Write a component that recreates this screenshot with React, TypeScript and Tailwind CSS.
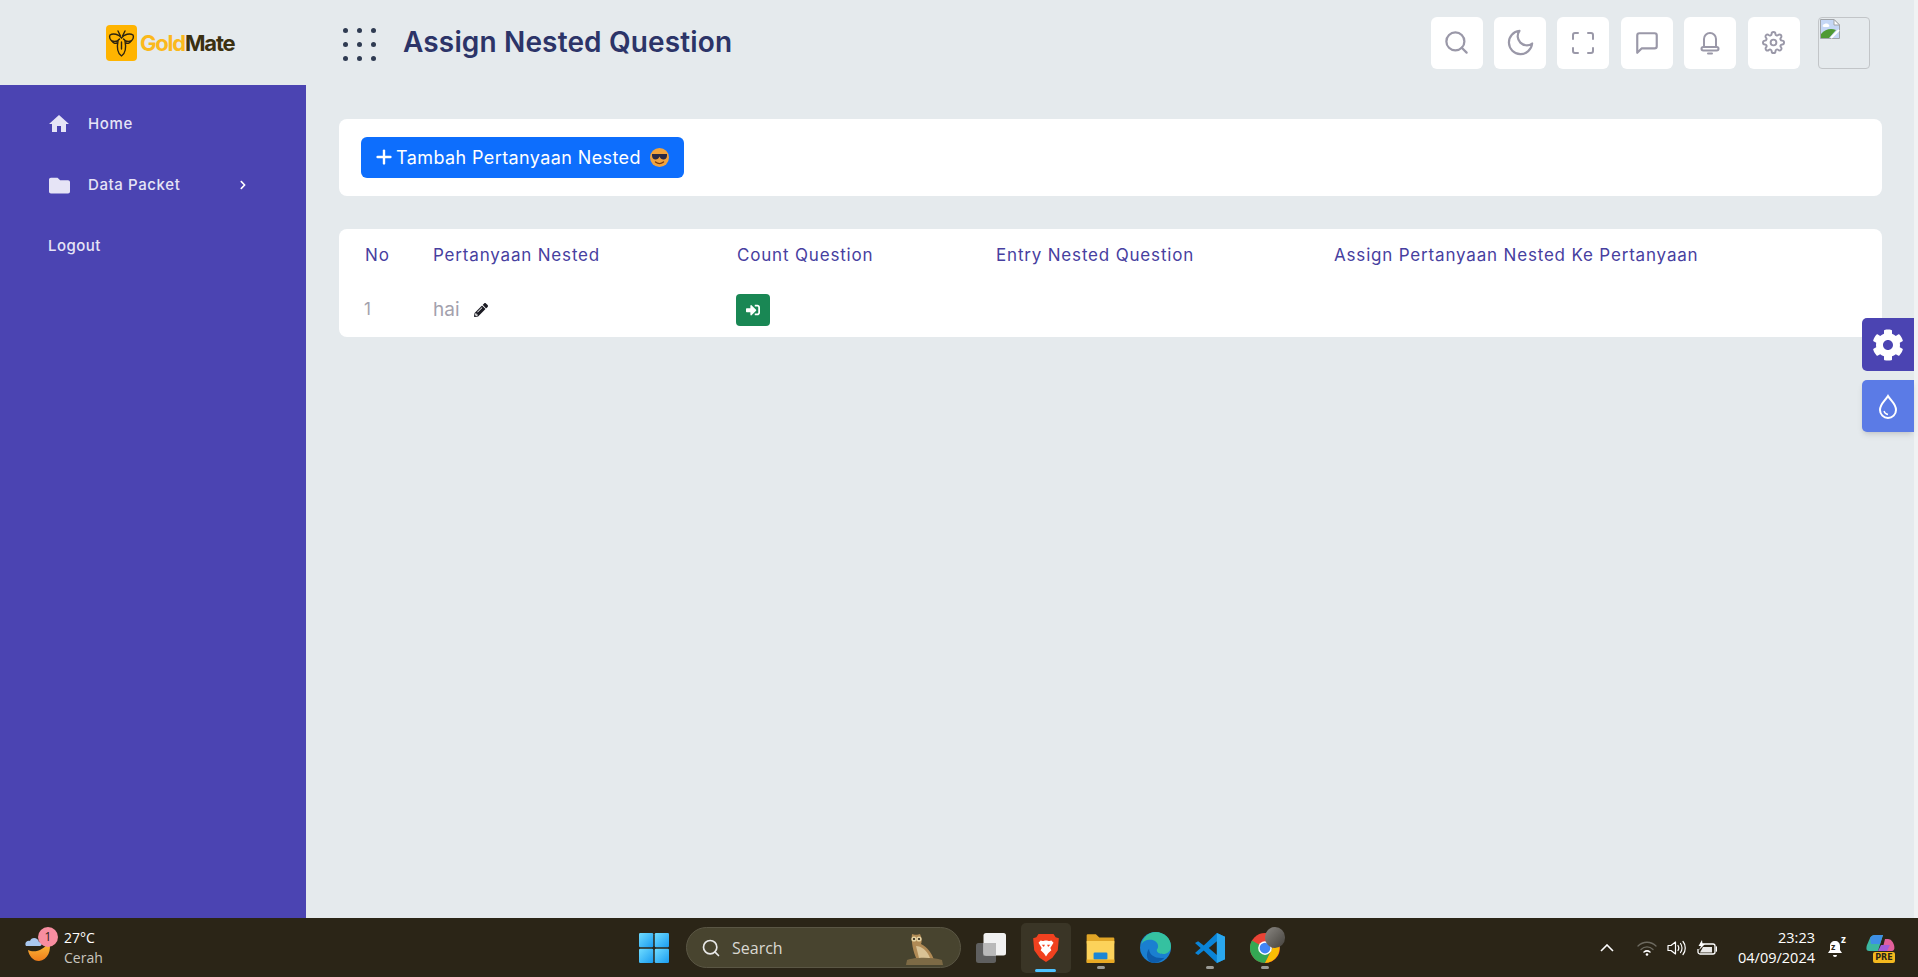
import { useState } from "react";
import { FaFolder, FaChevronRight, FaPencilAlt, FaSignInAlt, FaCog } from "react-icons/fa";
import { FiSearch, FiMoon, FiMessageSquare, FiSettings, FiPlus } from "react-icons/fi";
import { MdHome } from "react-icons/md";

const font = "font-['Inter','Open_Sans',sans-serif]";

function Logo() {
  return (
    <div className="flex items-center gap-[3px]">
      <div className="w-[31px] h-[36px] rounded-[4px] bg-[#ffb400] flex items-center justify-center">
        <svg width="27" height="29" viewBox="0 0 27 29" fill="none" stroke="#2d2410" strokeWidth="1.400" strokeLinecap="round">
          <path d="M13.500 9C11 5 5 4 2 6c-1 2 0 5 2 6 3 1 6 0 7.500-2" />
          <path d="M13.500 9C16 5 22 4 25 6c1 2 0 5-2 6-3 1-6 0-7.500-2" />
          <path d="M4 12c1 2 3 3 5 2" />
          <path d="M23 12c-1 2-3 3-5 2" />
          <path d="M10 12c-1 5-1 12 3.500 15 4.500-3 4.500-10 3.500-15" />
          <path d="M13.500 13v7" />
          <path d="M10 2l2.500 5M17 2l-2.500 5" />
        </svg>
      </div>
      <div className="text-[22px] font-bold tracking-[-1.200px]">
        <span className="text-[#fbb91c]">Gold</span>
        <span className="text-[#3b3011]">Mate</span>
      </div>
    </div>
  );
}

function MenuDots() {
  return (
    <div className="grid grid-cols-3 gap-[9px]">
      {[1, 2, 3, 4, 5, 6, 7, 8, 9].map((d) => (
        <span key={d} className="w-[5px] h-[5px] rounded-full bg-[#2f3b52]" />
      ))}
    </div>
  );
}

function FullscreenIcon() {
  return (
    <svg width="22" height="22" viewBox="0 0 22 22" fill="none" stroke="#9a98a8" strokeWidth="2" strokeLinecap="round">
      <path d="M1 7V3a2 2 0 0 1 2-2h3M16 1h3a2 2 0 0 1 2 2v4M21 16v3a2 2 0 0 1-2 2h-3M6 21H3a2 2 0 0 1-2-2v-3" />
    </svg>
  );
}

function BellIcon() {
  return (
    <svg width="20" height="24" viewBox="0 0 20 24" fill="none" stroke="#9a98a8" strokeWidth="2" strokeLinecap="round" strokeLinejoin="round">
      <path d="M4 16V8a6 6 0 0 1 12 0v8" />
      <rect x="1.500" y="16" width="17" height="3.500" rx="1.750" />
      <path d="M8 22.500h4" />
    </svg>
  );
}

function BrokenImage() {
  return (
    <div className="w-[52px] h-[52px] ml-[7px] rounded-[4px] border border-[#c2c5c8]">
      <svg width="20" height="20" viewBox="0 0 20 20" className="mt-[1px] ml-[1px]">
        <path d="M.5.500h13.500l5.500 5.500v13.500H.5z" fill="#c5d7f5" stroke="#a0a4a8" />
        <path d="M14 .5V6h5.500z" fill="#ffffff" stroke="#a0a4a8" />
        <path d="M1 19v-4c4-5 10-6 15-4l-7 8z" fill="#4f9a34" />
        <path d="M3 6c2-2 5-2 6 0 1 1 0 2-1 2H4C3 8 2 7 3 6z" fill="#ffffff" />
        <path d="M11 19l8-8" stroke="#ffffff" strokeWidth="2" />
      </svg>
    </div>
  );
}

function SunglassesEmoji() {
  return (
    <svg width="21" height="21" viewBox="0 0 21 21" className="ml-[8px]">
      <circle cx="10.500" cy="10.500" r="9.500" fill="#f2a33c" />
      <path d="M3 7h15v1.500c0 2.500-1.500 4-3.500 4-2 0-3.200-1.200-4-3-.8 1.800-2 3-4 3-2 0-3.500-1.500-3.500-4z" fill="#2b2a45" />
      <path d="M6.500 15c2.500 2 5.500 2 8 0" stroke="#7a3d12" strokeWidth="1.400" fill="none" strokeLinecap="round" />
    </svg>
  );
}

function WeatherIcon() {
  return (
    <div className="relative w-[30px] h-[30px]">
      <svg width="30" height="30" viewBox="0 0 30 30">
        <defs>
          <linearGradient id="moon" x1="0" y1="0" x2="0" y2="1">
            <stop offset="0" stopColor="#ffc640" />
            <stop offset="1" stopColor="#ef7d1a" />
          </linearGradient>
        </defs>
        <path d="M3 17c6 3 16 1 21-9 3 9-1 19-10 20-6 0-10-5-11-11z" fill="url(#moon)" />
        <path d="M1 13c-2-3 1-6 4-5 1-4 8-4 9 1 3 0 4 4 0 4z" fill="#a9c8f0" />
      </svg>
      <div className="absolute top-[-6px] left-[13px] w-[20px] h-[20px] rounded-full bg-[#f88ea0] text-[#2b2517] text-[12px] flex items-center justify-center">
        1
      </div>
    </div>
  );
}

function OwlIcon() {
  return (
    <svg width="37" height="33" viewBox="0 0 37 33">
      <path d="M6 2c2 1 6 1 8 0 2 4 2 8 1 10 6 3 11 9 13 16H11C7 20 5 9 6 2z" fill="#b08a55" />
      <circle cx="8" cy="7" r="2.600" fill="#e6d3a3" />
      <circle cx="13" cy="7" r="2.600" fill="#e6d3a3" />
      <circle cx="8" cy="7" r="1.100" fill="#2b2517" />
      <circle cx="13" cy="7" r="1.100" fill="#2b2517" />
      <path d="M10 14c5 0 11 4 14 12H13z" fill="#d9c294" />
      <path d="M1 28c7-3 26-3 35 0l1 5H0z" fill="#7d6a45" />
    </svg>
  );
}

function WindowsLogo() {
  return (
    <svg width="30" height="30" viewBox="0 0 24 24">
      <defs>
        <linearGradient id="win" x1="0" y1="0" x2="1" y2="1">
          <stop offset="0" stopColor="#6fdcff" />
          <stop offset="1" stopColor="#1a9cf0" />
        </linearGradient>
      </defs>
      <rect x="0" y="0" width="11.400" height="11.400" rx="1" fill="url(#win)" />
      <rect x="12.600" y="0" width="11.400" height="11.400" rx="1" fill="url(#win)" />
      <rect x="0" y="12.600" width="11.400" height="11.400" rx="1" fill="url(#win)" />
      <rect x="12.600" y="12.600" width="11.400" height="11.400" rx="1" fill="url(#win)" />
    </svg>
  );
}

function TaskView() {
  return (
    <svg width="30" height="30" viewBox="0 0 24 24">
      <rect x="0" y="8" width="16" height="16" rx="2" fill="#5f5f5f" />
      <rect x="6" y="0" width="18" height="18" rx="2" fill="#f1f1f1" />
      <rect x="6" y="8" width="10" height="10" fill="#b9b9b9" />
    </svg>
  );
}

function BraveLogo() {
  return (
    <svg width="26" height="30" viewBox="0 0 24 28">
      <path d="M5 1h14l2 3 3 1-1 11-5 7-6 4-6-4-5-7L0 5l3-1z" fill="#f1411f" />
      <path d="M7 7c2 1 3 0 5 0s3 1 5 0l2 2-3 5 1 2-3 3-2 3-2-3-3-3 1-2-3-5z" fill="#fff" />
      <path d="M8 11h3l-1 2zM16 11h-3l1 2z" fill="#f1411f" />
    </svg>
  );
}

function FolderIcon() {
  return (
    <svg width="31" height="30" viewBox="0 0 24 26">
      <path d="M0 2a1 1 0 0 1 1-1h7l3 3h12a1 1 0 0 1 1 1v4H0z" fill="#e0a526" />
      <path d="M0 7h24v18a1 1 0 0 1-1 1H1a1 1 0 0 1-1-1z" fill="#fcd25a" />
      <rect x="6" y="17" width="12" height="6" rx="1" fill="#1b86d6" />
      <rect x="0" y="23" width="24" height="3" fill="#e9a923" />
    </svg>
  );
}

function EdgeLogo() {
  return (
    <svg width="31" height="31" viewBox="0 0 24 24">
      <circle cx="12" cy="12" r="12" fill="#1a7fd0" />
      <path d="M1 10C2 4 7 0 12 0c7 0 12 5 12 11 0 4-3 6-6 6-3 0-5-1-5-3 0-1 1-1 1-3 0-3-3-5-6-5-3 0-6 1-7 4z" fill="#35c1a0" />
      <path d="M11 24C5 24 4 17 7 13c0 5 5 8 12 7-2 2-5 4-8 4z" fill="#0d5cab" />
    </svg>
  );
}

function VscodeLogo() {
  return (
    <svg width="30" height="30" viewBox="0 0 24 24">
      <path d="M17.500 0 24 3v18l-6.500 3L7 14l-4.500 3.500L0 16l4.500-4L0 8l2.500-1.500L7 10z" fill="#0a84d8" />
      <path d="M17.500 6.500 11 12l6.500 5.500z" fill="#2b2517" />
      <path d="M17.500 0 24 3v18l-6.500 3z" fill="#2aa7ee" />
    </svg>
  );
}

function ChromeLogo() {
  return (
    <div className="relative w-[30px] h-[30px]">
      <svg width="30" height="30" viewBox="0 0 24 24">
        <circle cx="12" cy="12" r="12" fill="#ea4335" />
        <path d="M12 24A12 12 0 0 1 1.600 6L12 12l6 0-6 12z" fill="#34a853" />
        <path d="M12 24l6-12-1-5h5.500A12 12 0 0 1 12 24z" fill="#fbbc04" />
        <circle cx="12" cy="12" r="5.500" fill="#fff" />
        <circle cx="12" cy="12" r="4.300" fill="#4285f4" />
      </svg>
      <div className="absolute top-[-6px] left-[15px] w-[20px] h-[21px] rounded-full bg-gradient-to-br from-[#8b8883] to-[#45423d]" />
    </div>
  );
}

function CopilotLogo() {
  return (
    <div className="relative w-[29px] h-[24px] -mt-[4px]">
      <svg width="29" height="22" viewBox="0 0 29 22">
        <path d="M9 1h8l-5 16H3C0 17 0 14 1 11l3-7c1-2 3-3 5-3z" fill="#3bb7a0" />
        <path d="M9 1h8l-3 9H5l-1-6c1-2 3-3 5-3z" fill="#3e8fe6" />
        <path d="M19 5h3c3 0 5 3 6 6 1 4 0 6-3 6h-9z" fill="#e2609c" />
        <path d="M12 17h9l3-6H15z" fill="#a25bd8" />
      </svg>
      <div className="absolute bottom-[-5px] right-0 w-[22px] text-center h-[11px] rounded-[2px] bg-[#f4b81e] text-[#2b2517] text-[8px] leading-[11px] font-bold font-['DejaVu_Sans',sans-serif]">
        PRE
      </div>
    </div>
  );
}

function WifiIcon() {
  return (
    <svg width="20" height="16" viewBox="0 0 20 16" fill="none" strokeLinecap="round">
      <path d="M1 6c5-5 13-5 18 0" stroke="#6d6a60" strokeWidth="1.300" />
      <path d="M4 9.500c3.500-3.500 8.500-3.500 12 0" stroke="#6d6a60" strokeWidth="1.300" />
      <path d="M7 12c2-1.500 4-1.500 6 0" stroke="#ffffff" strokeWidth="1.500" />
      <circle cx="10" cy="14.500" r="1.300" fill="#ffffff" />
    </svg>
  );
}

function SoundIcon() {
  return (
    <svg width="20" height="16" viewBox="0 0 20 16" fill="none" stroke="#ffffff" strokeWidth="1.200" strokeLinecap="round">
      <path d="M1 5.500h3L8.500 2v12L4 10.500H1z" strokeLinejoin="round" />
      <path d="M11 5.500c1 1.500 1 3.500 0 5M13.500 3.500c2 2.500 2 6.500 0 9M16 1.500c3 3.500 3 9.500 0 13" />
    </svg>
  );
}

function BatteryIcon() {
  return (
    <svg width="20" height="16" viewBox="0 0 20 16" fill="none" stroke="#ffffff" strokeWidth="1.300">
      <path d="M4 4h12a2 2 0 0 1 2 2v6a2 2 0 0 1-2 2H3a2 2 0 0 1-2-2V9" />
      <path d="M19.500 7v4" strokeLinecap="round" />
      <path d="M5 0 1.500 6H4l-2 4 6-6H5.500z" fill="#ffffff" stroke="none" />
      <path d="M3 12.500 6 7h9v5.500z" fill="#ffffff" stroke="none" opacity="0.9" />
    </svg>
  );
}

function SnoozeBell() {
  return (
    <div className="relative w-[16px] h-[20px]">
      <svg width="16" height="20" viewBox="0 0 16 20">
        <path d="M8 3c-3 0-5 2-5 5v4l-2 3h14l-2-3V8c0-3-2-5-5-5z" fill="#ffffff" />
        <path d="M6 17a2 2 0 0 0 4 0z" fill="#ffffff" />
      </svg>
      <span className="absolute top-[4px] left-[4px] text-[9px] leading-[10px] font-bold text-[#2b2517]">z</span>
      <span className="absolute top-[-4px] right-[-3px] text-[10px] leading-[10px] font-bold text-white">z</span>
    </div>
  );
}

export default function App() {
  const [rows] = useState([{ id: 1, question: "hai" }]);

  const headerIcons = [
    <FiSearch key="search" className="w-[27px] h-[27px]" />,
    <FiMoon key="moon" className="w-[31px] h-[31px] stroke-[1.700]" />,
    <FullscreenIcon key="full" />,
    <FiMessageSquare key="msg" className="w-[26px] h-[26px]" />,
    <BellIcon key="bell" />,
    <FiSettings key="gear" className="w-[23px] h-[23px]" />,
  ];

  return (
    <div className={`w-full h-[977px] flex flex-col overflow-hidden bg-[#e5eaed] ${font}`}>
      <div className="flex flex-1 min-h-0 relative">
        <div className="flex-1 flex flex-col min-w-0">
          {/* top bar */}
          <header className="h-[85px] flex items-center shrink-0">
            <div className="w-[306px] pl-[106px] pt-[1px] shrink-0">
              <Logo />
            </div>
            <div className="ml-[37px] mt-[3px]">
              <MenuDots />
            </div>
            <h1 className="ml-[27px] pb-[1px] text-[28px] font-semibold text-[#2c3468] tracking-[0.15px] whitespace-nowrap">
              Assign Nested Question
            </h1>
            <div className="ml-auto flex items-center gap-[11.400px] mr-[44px]">
              {headerIcons.map((icon) => (
                <div key={icon.key} className="w-[52px] h-[52px] rounded-[6px] bg-white flex items-center justify-center text-[#9a98a8]">
                  {icon}
                </div>
              ))}
              <BrokenImage />
            </div>
          </header>

          <div className="flex-1 flex min-h-0">
            {/* sidebar */}
            <aside className="w-[306px] shrink-0 bg-[#4b44b2] pt-[19px] text-[15px] font-medium text-[#e6e4f6]">
              <div className="h-[40px] flex items-center pl-[48px]">
                <MdHome className="w-[24px] h-[24px] -ml-[1px] mr-[-2px]" />
                <span className="ml-[19px] tracking-[0.65px]">Home</span>
              </div>
              <div className="h-[40px] mt-[21px] flex items-center pl-[49px]">
                <FaFolder className="w-[21px] h-[21px]" />
                <span className="ml-[18px] tracking-[0.6px]">Data Packet</span>
                <FaChevronRight className="w-[10px] h-[10px] ml-[58px] text-white" />
              </div>
              <div className="h-[40px] mt-[21px] flex items-center pl-[48px] tracking-[0.45px]">Logout</div>
            </aside>

            {/* content */}
            <main className="flex-1 pl-[33px] pr-[32px] pt-[34px] min-w-0">
              <section className="h-[77px] rounded-[8px] bg-white flex items-center pl-[22px]">
                <button className="h-[41px] w-[323px] rounded-[6px] bg-[#0d6efd] text-white text-[18px] flex items-center pl-[12px] pb-[1px] whitespace-nowrap">
                  <FiPlus className="w-[22px] h-[22px] stroke-[2.600] mr-[1px]" />
                  <span className="tracking-[0.4px]">Tambah Pertanyaan Nested</span>
                  <SunglassesEmoji />
                </button>
              </section>

              <section className="mt-[33px] rounded-[8px] bg-white pl-[26px] text-[17px]">
                <div className="h-[54px] grid grid-cols-[69px_303px_259px_338px_1fr] items-center text-[#47409f] tracking-[0.82px] whitespace-nowrap">
                  <div>No</div>
                  <div className="-ml-[1px]">Pertanyaan Nested</div>
                  <div>Count Question</div>
                  <div>Entry Nested Question</div>
                  <div>Assign Pertanyaan Nested Ke Pertanyaan</div>
                </div>
                {rows.map((row) => (
                  <div key={row.id} className="h-[54px] grid grid-cols-[69px_303px_259px_338px_1fr] items-center text-[#a3a1ad]">
                    <div className="-ml-[1px]">{row.id}</div>
                    <div className="-ml-[1px] flex items-center text-[19px]">
                      {row.question}
                      <FaPencilAlt className="w-[14px] h-[14px] ml-[14px] text-[#1c1c24]" />
                    </div>
                    <div className="-ml-[1px]">
                      <div className="w-[34px] h-[32px] rounded-[4px] bg-[#198754] flex items-center justify-center text-white">
                        <FaSignInAlt className="w-[14px] h-[14px]" />
                      </div>
                    </div>
                  </div>
                ))}
              </section>
            </main>
          </div>
        </div>
        <div className="w-[4px] shrink-0 bg-[#f0f2f3]" />

        {/* floating buttons */}
        <div className="absolute top-[318px] right-[4px] flex flex-col gap-[9px]">
          <div className="w-[52px] h-[53px] rounded-l-[5px] bg-[#4b44b2] flex items-center justify-center text-white">
            <FaCog className="w-[32px] h-[32px]" />
          </div>
          <div className="w-[52px] h-[52px] rounded-l-[5px] bg-[#5b7be6] shadow-md flex items-center justify-center">
            <svg width="20" height="25" viewBox="0 0 20 25" fill="none" stroke="#ffffff" strokeWidth="2">
              <path d="M10 2c3 5 8 8 8 14a8 8 0 0 1-16 0c0-6 5-9 8-14z" />
              <path d="M6 17c.5 2 2 3 4 3.500" strokeWidth="1.300" />
            </svg>
          </div>
        </div>
      </div>

      {/* windows taskbar */}
      <footer className="h-[59px] shrink-0 bg-[#2b2517] flex items-center font-['Open_Sans',sans-serif] text-white">
        <div className="w-[639px] shrink-0 flex items-center pl-[25px]">
          <WeatherIcon />
          <div className="ml-[9px] text-[14px] leading-[20px]">
            <div>27°C</div>
            <div className="text-[#c9c6bf]">Cerah</div>
          </div>
        </div>
        <WindowsLogo />
        <div className="ml-[17px] w-[275px] h-[41px] rounded-full bg-[#48442f] border border-[#5a5644] flex items-center pl-[14px] relative">
          <FiSearch className="w-[20px] h-[20px] text-[#e8e8e8]" />
          <span className="ml-[11px] text-[16px] text-[#d9d8d2]">Search</span>
          <div className="absolute right-[17px] top-[4px]">
            <OwlIcon />
          </div>
        </div>
        <div className="ml-[15px]">
          <TaskView />
        </div>
        <div className="ml-[15px] w-[50px] h-[50px] rounded-[5px] bg-[#3a3526] flex items-center justify-center relative">
          <BraveLogo />
          <div className="absolute bottom-[1px] left-[14px] w-[21px] h-[3px] rounded-full bg-[#4cc2ff]" />
        </div>
        <div className="ml-[14px] relative">
          <FolderIcon />
          <div className="absolute bottom-[-6px] left-[12px] w-[8px] h-[3px] rounded-full bg-[#9b9b95]" />
        </div>
        <div className="ml-[24px]">
          <EdgeLogo />
        </div>
        <div className="ml-[24px] relative">
          <VscodeLogo />
          <div className="absolute bottom-[-6px] left-[11px] w-[8px] h-[3px] rounded-full bg-[#9b9b95]" />
        </div>
        <div className="ml-[25px] relative">
          <ChromeLogo />
          <div className="absolute bottom-[-6px] left-[11px] w-[8px] h-[3px] rounded-full bg-[#9b9b95]" />
        </div>

        <div className="ml-auto flex items-center pr-[23px]">
          <svg width="14" height="8" viewBox="0 0 14 8" fill="none" stroke="#ffffff" strokeWidth="1.600">
            <path d="M1 7l6-6 6 6" />
          </svg>
          <div className="ml-[23px]">
            <WifiIcon />
          </div>
          <div className="ml-[10px]">
            <SoundIcon />
          </div>
          <div className="ml-[10px]">
            <BatteryIcon />
          </div>
          <div className="ml-[11px] w-[87px] text-right text-[14.500px] leading-[20px]">
            <div>23:23</div>
            <div>04/09/2024</div>
          </div>
          <div className="ml-[12px]">
            <SnoozeBell />
          </div>
          <div className="ml-[23px]">
            <CopilotLogo />
          </div>
        </div>
      </footer>
    </div>
  );
}
